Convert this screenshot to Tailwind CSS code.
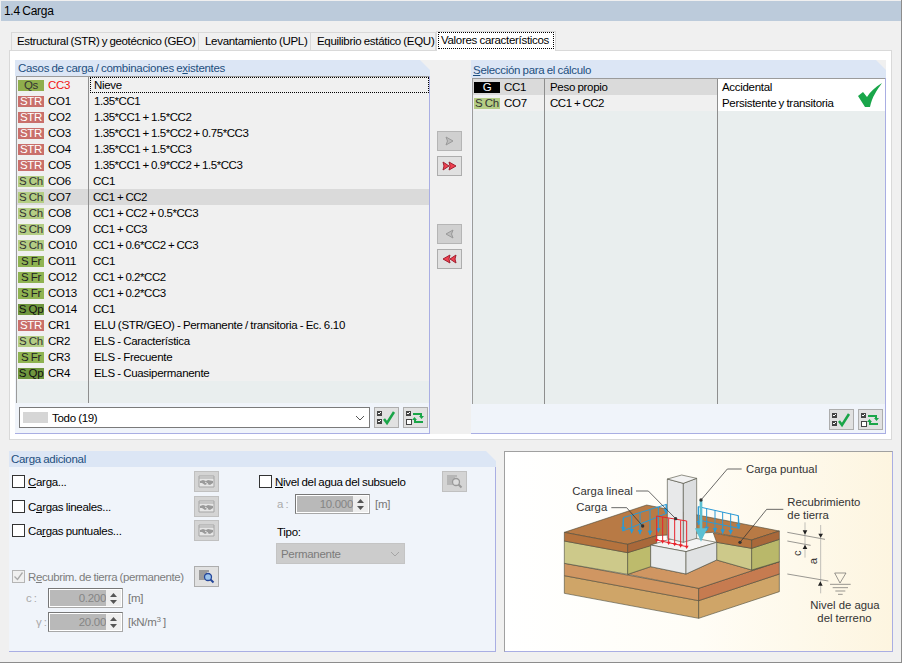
<!DOCTYPE html>
<html lang="es">
<head>
<meta charset="UTF-8">
<title>1.4 Carga</title>
<script src="https://cdn.jsdelivr.net/npm/@tailwindcss/browser@4"></script>
</head>
<body class="bg-[#f0f0f0] font-['Liberation_Sans',Arial,sans-serif] text-[11.5px] leading-[16px] tracking-[-0.3px] [word-spacing:-0.5px] whitespace-nowrap text-black">
<div class="w-[902px] h-[663px] bg-[#f0f0f0] pt-px border-r border-b border-[#8c8c8c] overflow-hidden">
    <!-- Titulo -->
    <div class="h-5 ml-px bg-[#bccbdb] pl-[3px] text-[12px] leading-[20px]">1.4 Carga</div>

    <!-- Pestañas -->
    <div class="flex items-end h-[20px] mt-[9px] pl-[11px]">
        <div class="h-[18px] w-[188px] border border-b-0 border-[#d9d9d9] pl-[5px] leading-[17px] tracking-[-0.35px]">Estructural (STR) y geotécnico (GEO)</div>
        <div class="h-[18px] w-[112px] border border-l-0 border-b-0 border-[#d9d9d9] pl-[6px] leading-[17px]">Levantamiento (UPL)</div>
        <div class="h-[18px] w-[125px] border border-l-0 border-b-0 border-[#d9d9d9] pl-[6px] leading-[17px]">Equilibrio estático (EQU)</div>
        <div class="h-[20px] w-[120px] border border-b-0 border-[#d9d9d9] bg-white px-[2px] pt-[1px] relative top-px">
            <span class="block outline-1 outline-dotted outline-black px-[2px] leading-[15px]">Valores característicos</span>
        </div>
    </div>

    <!-- Panel principal -->
    <div class="ml-[9px] w-[883px] h-[390px] border border-[#d9d9d9] bg-white pt-[9px] pl-[5px]">
      <div class="w-[871px] h-[374px] bg-[#f0f0f0] flex">
        <!-- Casos existentes -->
        <section class="w-[415px] h-[374px] flex flex-col">
            <div class="h-4 bg-[#dce6f5] pl-[3px] text-[#1e4f7e] leading-[17px] [clip-path:polygon(0_0,calc(100%-10px)_0,100%_10px,100%_100%,0_100%)]">Casos de carga / combinaciones e<u>x</u>istentes</div>
            <div class="flex-1 flex flex-col bg-[#f0f4fa] border-r border-b border-[#a9aee3]">
                <div class="h-[327px] ml-px border-t border-l border-[#9b9b9b] bg-[#e9eeee] relative">
                    <div class="absolute left-[71px] top-0 bottom-0 w-px bg-[#8e8e8e]"></div>
                    <div class="flex items-center h-4 bg-[#f0f0f0]"><span class="w-[26px] h-[11px] ml-px bg-[#8fae4c] text-center text-[#333] leading-[11px]">Qs</span><span class="w-[45px] pl-[4px] text-[#f01414]">CC3</span><span class="ml-px pl-[4px] w-[339px] h-4 outline-1 -outline-offset-1 outline-dotted outline-black">Nieve</span></div>
                    <div class="flex items-center h-4 bg-[#f0f0f0]"><span class="w-[26px] h-[11px] ml-px bg-[#c96f6b] text-center text-white leading-[11px]">STR</span><span class="w-[45px] pl-[4px]">CO1</span><span class="pl-[5px] tracking-[-0.45px]">1.35*CC1</span></div>
                    <div class="flex items-center h-4 bg-[#f0f0f0]"><span class="w-[26px] h-[11px] ml-px bg-[#c96f6b] text-center text-white leading-[11px]">STR</span><span class="w-[45px] pl-[4px]">CO2</span><span class="pl-[5px] tracking-[-0.45px]">1.35*CC1 + 1.5*CC2</span></div>
                    <div class="flex items-center h-4 bg-[#f0f0f0]"><span class="w-[26px] h-[11px] ml-px bg-[#c96f6b] text-center text-white leading-[11px]">STR</span><span class="w-[45px] pl-[4px]">CO3</span><span class="pl-[5px] tracking-[-0.45px]">1.35*CC1 + 1.5*CC2 + 0.75*CC3</span></div>
                    <div class="flex items-center h-4 bg-[#f0f0f0]"><span class="w-[26px] h-[11px] ml-px bg-[#c96f6b] text-center text-white leading-[11px]">STR</span><span class="w-[45px] pl-[4px]">CO4</span><span class="pl-[5px] tracking-[-0.45px]">1.35*CC1 + 1.5*CC3</span></div>
                    <div class="flex items-center h-4 bg-[#f0f0f0]"><span class="w-[26px] h-[11px] ml-px bg-[#c96f6b] text-center text-white leading-[11px]">STR</span><span class="w-[45px] pl-[4px]">CO5</span><span class="pl-[5px] tracking-[-0.45px]">1.35*CC1 + 0.9*CC2 + 1.5*CC3</span></div>
                    <div class="flex items-center h-4 bg-[#f0f0f0]"><span class="w-[26px] h-[11px] ml-px bg-[#b4cd84] text-center text-[#333] leading-[11px]">S Ch</span><span class="w-[45px] pl-[4px]">CO6</span><span class="pl-[4px]">CC1</span></div>
                    <div class="flex items-center h-4 bg-[#dadada]"><span class="w-[26px] h-[11px] ml-px bg-[#b4cd84] text-center text-[#333] leading-[11px]">S Ch</span><span class="w-[45px] pl-[4px]">CO7</span><span class="pl-[4px] tracking-[-0.45px]">CC1 + CC2</span></div>
                    <div class="flex items-center h-4 bg-[#f0f0f0]"><span class="w-[26px] h-[11px] ml-px bg-[#b4cd84] text-center text-[#333] leading-[11px]">S Ch</span><span class="w-[45px] pl-[4px]">CO8</span><span class="pl-[4px] tracking-[-0.45px]">CC1 + CC2 + 0.5*CC3</span></div>
                    <div class="flex items-center h-4 bg-[#f0f0f0]"><span class="w-[26px] h-[11px] ml-px bg-[#b4cd84] text-center text-[#333] leading-[11px]">S Ch</span><span class="w-[45px] pl-[4px]">CO9</span><span class="pl-[4px] tracking-[-0.45px]">CC1 + CC3</span></div>
                    <div class="flex items-center h-4 bg-[#f0f0f0]"><span class="w-[26px] h-[11px] ml-px bg-[#b4cd84] text-center text-[#333] leading-[11px]">S Ch</span><span class="w-[45px] pl-[4px]">CO10</span><span class="pl-[4px] tracking-[-0.45px]">CC1 + 0.6*CC2 + CC3</span></div>
                    <div class="flex items-center h-4 bg-[#f0f0f0]"><span class="w-[26px] h-[11px] ml-px bg-[#8fb352] text-center text-[#222] leading-[11px]">S Fr</span><span class="w-[45px] pl-[4px]">CO11</span><span class="pl-[4px]">CC1</span></div>
                    <div class="flex items-center h-4 bg-[#f0f0f0]"><span class="w-[26px] h-[11px] ml-px bg-[#8fb352] text-center text-[#222] leading-[11px]">S Fr</span><span class="w-[45px] pl-[4px]">CO12</span><span class="pl-[4px] tracking-[-0.45px]">CC1 + 0.2*CC2</span></div>
                    <div class="flex items-center h-4 bg-[#f0f0f0]"><span class="w-[26px] h-[11px] ml-px bg-[#8fb352] text-center text-[#222] leading-[11px]">S Fr</span><span class="w-[45px] pl-[4px]">CO13</span><span class="pl-[4px] tracking-[-0.45px]">CC1 + 0.2*CC3</span></div>
                    <div class="flex items-center h-4 bg-[#f0f0f0]"><span class="w-[26px] h-[11px] ml-px bg-[#6f963f] text-center text-[#111] leading-[11px]">S Qp</span><span class="w-[45px] pl-[4px]">CO14</span><span class="pl-[4px]">CC1</span></div>
                    <div class="flex items-center h-4 bg-[#f0f0f0]"><span class="w-[26px] h-[11px] ml-px bg-[#c96f6b] text-center text-white leading-[11px]">STR</span><span class="w-[45px] pl-[4px]">CR1</span><span class="pl-[5px]">ELU (STR/GEO) - Permanente / transitoria - Ec. 6.10</span></div>
                    <div class="flex items-center h-4 bg-[#f0f0f0]"><span class="w-[26px] h-[11px] ml-px bg-[#b4cd84] text-center text-[#333] leading-[11px]">S Ch</span><span class="w-[45px] pl-[4px]">CR2</span><span class="pl-[5px]">ELS - Característica</span></div>
                    <div class="flex items-center h-4 bg-[#f0f0f0]"><span class="w-[26px] h-[11px] ml-px bg-[#8fb352] text-center text-[#222] leading-[11px]">S Fr</span><span class="w-[45px] pl-[4px]">CR3</span><span class="pl-[5px]">ELS - Frecuente</span></div>
                    <div class="flex items-center h-4 bg-[#f0f0f0]"><span class="w-[26px] h-[11px] ml-px bg-[#6f963f] text-center text-[#111] leading-[11px]">S Qp</span><span class="w-[45px] pl-[4px]">CR4</span><span class="pl-[5px]">ELS - Cuasipermanente</span></div>
                </div>
                <div class="flex items-center gap-[4px] pl-[4px] pt-[4px]">
                    <div class="w-[351px] h-[21px] bg-white border border-[#7a7a7a] flex items-center pl-[3px] pr-[4px]">
                        <span class="w-[25px] h-[11px] bg-[#d6d6d6]"></span>
                        <span class="ml-[4px] flex-1">Todo (19)</span>
                        <svg width="10" height="6" viewBox="0 0 10 6"><path d="M1 1l4 4 4-4" fill="none" stroke="#555"/></svg>
                    </div>
                    <button class="w-[25px] h-[21px] bg-[#e1e1e1] border border-[#adadad] flex items-center justify-center">
                        <svg width="21" height="16" viewBox="0 0 21 16"><rect x="1" y="1" width="5" height="5" fill="#444"/><rect x="1" y="9" width="5" height="5" fill="#444"/><path d="M2 3l1 1 2-2M2 11l1 1 2-2" fill="none" stroke="#fff"/><path d="M8 9l3 4 7-11" fill="none" stroke="#1aa548" stroke-width="2.500"/></svg>
                    </button>
                    <button class="w-[25px] h-[21px] bg-[#e1e1e1] border border-[#adadad] flex items-center justify-center">
                        <svg width="21" height="16" viewBox="0 0 21 16"><rect x="1" y="1" width="5" height="5" fill="#444"/><rect x="1.500" y="9.500" width="5" height="5" fill="#fff" stroke="#444"/><path d="M2 3l1 1 2-2" fill="none" stroke="#fff"/><path d="M8 4h8v3M18 12h-8v-3" fill="none" stroke="#1aa548" stroke-width="2"/><path d="M14 6h5l-2.500 3zM12 10H7l2.500-3z" fill="#1aa548"/></svg>
                    </button>
                </div>
            </div>
        </section>

        <!-- Botones centrales -->
        <div class="w-[41px] pl-[7px] pt-[71px] flex flex-col">
            <button class="w-[25px] h-[20px] bg-[#d0d0d0] border border-[#b5b5b5] flex items-center justify-center">
                <svg width="11" height="10" viewBox="0 0 11 10"><path d="M2 1l7 4-7 4 1.500-4z" fill="#bdbdbd" stroke="#999"/></svg>
            </button>
            <button class="w-[25px] h-[20px] mt-[5px] bg-[#e1e1e1] border border-[#adadad] flex items-center justify-center">
                <svg width="15" height="10" viewBox="0 0 15 10"><path d="M1 1l6 4-6 4 1-4zM7 1l7 4-7 4 1-4z" fill="#f04050" stroke="#a02030"/></svg>
            </button>
            <button class="w-[25px] h-[20px] mt-[48px] bg-[#d0d0d0] border border-[#b5b5b5] flex items-center justify-center">
                <svg width="11" height="10" viewBox="0 0 11 10"><path d="M9 1L2 5l7 4-1.500-4z" fill="#bdbdbd" stroke="#999"/></svg>
            </button>
            <button class="w-[25px] h-[20px] mt-[5px] bg-[#e1e1e1] border border-[#adadad] flex items-center justify-center">
                <svg width="15" height="10" viewBox="0 0 15 10"><path d="M14 1L8 5l6 4-1-4zM8 1L1 5l7 4-1-4z" fill="#f04050" stroke="#a02030"/></svg>
            </button>
        </div>

        <!-- Seleccion -->
        <section class="w-[415px] h-[374px] flex flex-col">
            <div class="h-[18px] bg-[#dce6f5] pl-[2px] text-[#1e4f7e] leading-[21px] [clip-path:polygon(0_0,calc(100%-10px)_0,100%_10px,100%_100%,0_100%)]"><u>S</u>elección para el cálculo</div>
            <div class="flex-1 flex flex-col bg-[#f0f4fa] border-r border-b border-[#a9aee3]">
                <div class="h-[326px] ml-px border-t border-l border-[#9b9b9b] bg-[#e9eeee] relative">
                    <div class="absolute left-[71px] top-0 bottom-0 w-px bg-[#8e8e8e]"></div>
                    <div class="absolute left-[244px] top-0 bottom-0 w-px bg-[#8e8e8e]"></div>
                    <div class="absolute left-[245px] top-0 w-[167px] h-8 bg-white"></div>
                    <svg class="absolute left-[385px] top-[4px]" width="24" height="24" viewBox="0 0 24 24"><path d="M0 13l5-4 4 5C12 9 17 4 24 0c-5 7-10 14-12 24H7z" fill="#19a64a"/></svg>
                    <div class="flex items-center h-4 bg-[#dadada] w-[245px]"><span class="w-[26px] h-[11px] ml-px bg-black text-center text-white leading-[11px]">G</span><span class="w-[45px] pl-[4px]">CC1</span><span class="pl-[5px]">Peso propio</span></div>
                    <div class="flex items-center h-4 bg-[#f0f0f0] w-[245px]"><span class="w-[26px] h-[11px] ml-px bg-[#b4cd84] text-center text-[#333] leading-[11px]">S Ch</span><span class="w-[45px] pl-[4px]">CO7</span><span class="pl-[5px] tracking-[-0.45px]">CC1 + CC2</span></div>
                    <div class="absolute left-[249px] top-0"><div class="h-4">Accidental</div><div class="h-4">Persistente y transitoria</div></div>
                </div>
                <div class="flex justify-end gap-[4px] pr-[2px] pt-[5px]">
                    <button class="w-[25px] h-[21px] bg-[#e1e1e1] border border-[#adadad] flex items-center justify-center">
                        <svg width="21" height="16" viewBox="0 0 21 16"><rect x="1" y="1" width="5" height="5" fill="#444"/><rect x="1" y="9" width="5" height="5" fill="#444"/><path d="M2 3l1 1 2-2M2 11l1 1 2-2" fill="none" stroke="#fff"/><path d="M8 9l3 4 7-11" fill="none" stroke="#1aa548" stroke-width="2.500"/></svg>
                    </button>
                    <button class="w-[25px] h-[21px] bg-[#e1e1e1] border border-[#adadad] flex items-center justify-center">
                        <svg width="21" height="16" viewBox="0 0 21 16"><rect x="1" y="1" width="5" height="5" fill="#444"/><rect x="1.500" y="9.500" width="5" height="5" fill="#fff" stroke="#444"/><path d="M2 3l1 1 2-2" fill="none" stroke="#fff"/><path d="M8 4h8v3M18 12h-8v-3" fill="none" stroke="#1aa548" stroke-width="2"/><path d="M14 6h5l-2.500 3zM12 10H7l2.500-3z" fill="#1aa548"/></svg>
                    </button>
                </div>
            </div>
        </section>
      </div>
    </div>

    <!-- Parte inferior -->
    <div class="flex mt-[11px] ml-[9px] gap-[8px]">
        <section class="w-[487px] h-[201px] flex flex-col">
            <div class="h-4 bg-[#dce6f5] pl-[2px] text-[#1e4f7e] leading-[17px] [clip-path:polygon(0_0,calc(100%-10px)_0,100%_10px,100%_100%,0_100%)]">Carga adicional</div>
            <div class="flex-1 flex bg-[#f0f4fa] border-r border-b border-[#a9aee3]">
                <!-- Columna izquierda -->
                <div class="w-[250px] pl-[3px] pt-[4px]">
                    <div class="flex items-center h-[21px]"><span class="w-[13px] h-[13px] bg-white border border-[#333]"></span><span class="ml-[3px] w-[166px]"><u>C</u>arga...</span>
                        <button class="w-[25px] h-[21px] bg-[#d4d4d4] border border-[#c0c0c0] flex items-center justify-center"><svg width="17" height="13" viewBox="0 0 17 13"><path d="M1 1h15v11H1z" fill="#e6e6e6" stroke="#a5a5a5"/><path d="M1 3h15" stroke="#a5a5a5"/><path d="M2 6l3-1 3 1 2-1 5 1v2l-3 2-3-1-2 1-3-2H2z" fill="#9a9a9a"/><path d="M7 7l3 2" stroke="#e6e6e6"/></svg></button></div>
                    <div class="flex items-center h-[21px] mt-[4px]"><span class="w-[13px] h-[13px] bg-white border border-[#333]"></span><span class="ml-[3px] w-[166px]">C<u>a</u>rgas lineales...</span>
                        <button class="w-[25px] h-[21px] bg-[#d4d4d4] border border-[#c0c0c0] flex items-center justify-center"><svg width="17" height="13" viewBox="0 0 17 13"><path d="M1 1h15v11H1z" fill="#e6e6e6" stroke="#a5a5a5"/><path d="M1 3h15" stroke="#a5a5a5"/><path d="M2 6l3-1 3 1 2-1 5 1v2l-3 2-3-1-2 1-3-2H2z" fill="#9a9a9a"/><path d="M7 7l3 2" stroke="#e6e6e6"/></svg></button></div>
                    <div class="flex items-center h-[21px] mt-[3px]"><span class="w-[13px] h-[13px] bg-white border border-[#333]"></span><span class="ml-[3px] w-[166px]">Ca<u>r</u>gas puntuales...</span>
                        <button class="w-[25px] h-[21px] bg-[#d4d4d4] border border-[#c0c0c0] flex items-center justify-center"><svg width="17" height="13" viewBox="0 0 17 13"><path d="M1 1h15v11H1z" fill="#e6e6e6" stroke="#a5a5a5"/><path d="M1 3h15" stroke="#a5a5a5"/><path d="M2 6l3-1 3 1 2-1 5 1v2l-3 2-3-1-2 1-3-2H2z" fill="#9a9a9a"/><path d="M7 7l3 2" stroke="#e6e6e6"/></svg></button></div>
                    <div class="flex items-center h-[21px] mt-[25px]"><span class="w-[13px] h-[13px] bg-[#f0f0f0] border border-[#b5b5b5] flex items-center justify-center"><svg width="11" height="11" viewBox="0 0 11 11"><path d="M1.500 5.500l3 3 5-7" fill="none" stroke="#aaa" stroke-width="1.300"/></svg></span><span class="ml-[3px] w-[166px] text-[#7d7d7d] tracking-[-0.4px]">R<u>e</u>cubrim. de tierra (permanente)</span>
                        <button class="w-[25px] h-[21px] bg-[#e1e1e1] border border-[#adadad] flex items-center justify-center"><svg width="17" height="15" viewBox="0 0 17 15"><path d="M1 2h10M1 4h8M1 6h6M1 8h6M1 10h7" stroke="#555"/><circle cx="10" cy="8" r="3.500" fill="#9cc4ea" stroke="#24469a" stroke-width="1.300"/><path d="M12.500 10.500l3 3" stroke="#24469a" stroke-width="2"/></svg></button></div>
                    <div class="flex items-center h-[20px] mt-px"><span class="w-[36px] pl-[14px] text-[#aaa]">c :</span>
                        <div class="w-[75px] h-[20px] flex border border-[#a8a8a8] border-l-[#777] border-t-[#777] bg-white p-px"><span class="w-[56px] bg-[#b9b9b9] text-right leading-[16px] text-[#858585]">0.200</span><span class="flex-1 flex flex-col items-center justify-center gap-[3px] bg-[#eee]"><svg width="7" height="4" viewBox="0 0 7 4"><path d="M0 4l3.500-4L7 4z" fill="#555"/></svg><svg width="7" height="4" viewBox="0 0 7 4"><path d="M0 0l3.500 4L7 0z" fill="#555"/></svg></span></div>
                        <span class="ml-[5px] text-[#777]">[m]</span></div>
                    <div class="flex items-center h-[20px] mt-[4px]"><span class="w-[36px] pl-[24px] text-[#aaa]">γ :</span>
                        <div class="w-[75px] h-[20px] flex border border-[#a8a8a8] border-l-[#777] border-t-[#777] bg-white p-px"><span class="w-[56px] bg-[#b9b9b9] text-right leading-[16px] text-[#858585]">20.00</span><span class="flex-1 flex flex-col items-center justify-center gap-[3px] bg-[#eee]"><svg width="7" height="4" viewBox="0 0 7 4"><path d="M0 4l3.500-4L7 4z" fill="#555"/></svg><svg width="7" height="4" viewBox="0 0 7 4"><path d="M0 0l3.500 4L7 0z" fill="#555"/></svg></span></div>
                        <span class="ml-[5px] text-[#777]">[kN/m<sup class="text-[8px] leading-none">3</sup> ]</span></div>
                </div>
                <!-- Columna derecha -->
                <div class="pt-[4px]">
                    <div class="flex items-center h-[21px]"><span class="w-[13px] h-[13px] bg-white border border-[#333]"></span><span class="ml-[3px] w-[167px]"><u>N</u>ivel del agua del subsuelo</span>
                        <button class="w-[25px] h-[21px] bg-[#d4d4d4] border border-[#c0c0c0] flex items-center justify-center"><svg width="17" height="15" viewBox="0 0 17 15"><path d="M1 2h10M1 4h8M1 6h6M1 8h6M1 10h7" stroke="#999"/><circle cx="10" cy="8" r="3.500" fill="#ddd" stroke="#999" stroke-width="1.300"/><path d="M12.500 10.500l3 3" stroke="#999" stroke-width="2"/></svg></button></div>
                    <div class="flex items-center h-[20px] mt-[2px]"><span class="w-[36px] pl-[18px] text-[#aaa]">a :</span>
                        <div class="w-[75px] h-[20px] flex border border-[#a8a8a8] border-l-[#777] border-t-[#777] bg-white p-px"><span class="w-[56px] bg-[#b9b9b9] text-right leading-[16px] text-[#858585]">10.000</span><span class="flex-1 flex flex-col items-center justify-center gap-[3px] bg-[#eee]"><svg width="7" height="4" viewBox="0 0 7 4"><path d="M0 4l3.500-4L7 4z" fill="#555"/></svg><svg width="7" height="4" viewBox="0 0 7 4"><path d="M0 0l3.500 4L7 0z" fill="#555"/></svg></span></div>
                        <span class="ml-[5px] text-[#777]">[m]</span></div>
                    <div class="mt-[10px] pl-[18px]">Tipo:</div>
                    <div class="mt-[3px] ml-[17px] w-[129px] h-[21px] bg-[#cccccc] border border-[#c4c4c4] flex items-center pl-[4px] pr-[4px] text-[#7b7b7b]">
                        <span class="flex-1">Permanente</span>
                        <svg width="10" height="6" viewBox="0 0 10 6"><path d="M1 1l4 4 4-4" fill="none" stroke="#a5a5a5"/></svg>
                    </div>
                </div>
            </div>
        </section>

        <!-- Esquema -->
        <section class="w-[389px] h-[201px] border-l border-t border-r border-b border-[#a0a0a0] border-r-[#a9aee3] border-b-[#a9aee3] bg-gradient-to-r from-white via-[#fffdf6] to-[#fdf5e0]">
            <svg class="block tracking-normal [word-spacing:0]" width="387" height="199" viewBox="15 21 1161 597" font-family="Liberation Sans, Arial, sans-serif" font-size="34" fill="#333">
                <g stroke="#4a4a3a" stroke-width="1.800" stroke-linejoin="round">
                    <!-- capas de suelo -->
                    <path d="M193 392L596 467V520L193 445z" fill="#cfa568"/>
                    <path d="M596 467L838 387V440L596 520z" fill="#cfa568"/>
                    <path d="M193 355L596 430V467L193 392z" fill="#d09662"/>
                    <path d="M596 430L838 350V387L596 467z" fill="#c67b50"/>
                    <path d="M383 388L452 365L558 387L650 345L755 375L838 350L596 430z" fill="#d09662"/>
                    <path d="M193 288L383 323V388L193 355z" fill="#cdc98a"/>
                    <path d="M383 323L452 300V365L383 388z" fill="#bdbb6c"/>
                    <path d="M650 292L755 310V375L650 345z" fill="#cdc98a"/>
                    <path d="M755 310L838 283V350L755 375z" fill="#b9b86a"/>
                    <path d="M193 262L440 180L838 258L755 285L640 262L470 272L383 298z" fill="#b87a45"/>
                    <path d="M193 262L383 298V323L193 288z" fill="#b5733e"/>
                    <path d="M383 298L470 272V297L383 323z" fill="#a9683a"/>
                    <path d="M640 264L755 285V310L650 292z" fill="#b5733e"/>
                    <path d="M755 285L838 258V283L755 310z" fill="#a9683a"/>
                    <!-- zapata y pilar -->
                    <path d="M452 300L545 272L650 292L558 320z" fill="#f4f4f4"/>
                    <path d="M452 300L558 320V387L452 365z" fill="#e9ebec"/>
                    <path d="M558 320L650 292V345L558 387z" fill="#e0e2e3"/>
                    <path d="M502 102L550 115V292L502 280z" fill="#e8e9ea"/>
                    <path d="M550 115L590 100V280L550 292z" fill="#dcdedf"/>
                    <path d="M502 102L545 90L590 100L550 115z" fill="#f2f2f2"/>
                </g>
                <!-- carga superficial -->
                <g fill="none" stroke="#2a9ad6" stroke-width="3">
                    <path d="M370 218L500 178V205L368 258zM370 218V258M395 211V265M420 203V268M450 194V270M475 186V262M498 178V205"/>
                    <path d="M595 185L715 212L718 250L595 225zM595 185V240M620 190V258M645 196V262M668 201V266M692 206V268M715 212V250"/>
                </g>
                <g fill="#2a9ad6">
                    <path d="M363 246h14l-7 12zM388 252h14l-7 13zM413 255h14l-7 13zM443 257h14l-7 13zM468 249h14l-7 13zM490 192h14l-7 13z"/>
                    <path d="M590 228h14l-7 13zM613 245h14l-7 13zM638 249h14l-7 13zM661 253h14l-7 13zM685 255h14l-7 13zM708 238h14l-7 12z"/>
                </g>
                <!-- carga lineal -->
                <g fill="none" stroke="#e8242c" stroke-width="3">
                    <path d="M470 213L560 228V305L470 285zM488 216V289M506 220V293M524 223V297M542 226V301"/>
                </g>
                <path d="M464 282h12l-6 10zM482 286h12l-6 10zM500 290h12l-6 10zM518 294h12l-6 10zM536 298h12l-6 10zM554 302h12l-6 10z" fill="#e8242c"/>
                <!-- carga puntual -->
                <path d="M599 165H607V250H622L603 290L585 250H599z" fill="#5cc0d2"/>
                <!-- cotas -->
                <g fill="none" stroke="#555" stroke-width="1.800">
                    <path d="M862 262L975 283M862 288L932 301M862 387L985 408"/>
                    <path d="M915 232V338M962 240V445" stroke="#999"/>
                    <path d="M1004 384H1038L1020 414zM990 418H1052M998 428H1044M1006 438H1036M1014 448H1028"/>
                </g>
                <path d="M908 256h14l-7 13zM955 266h14l-7 12zM908 312h14l-7-13zM954 422h14l-7-13z" fill="#222"/>
                <!-- lineas de referencia -->
                <g fill="none" stroke="#333" stroke-width="2.200">
                    <path d="M408 138H445L527 221M334 188H380L428 243M603 165L682 72H725M720 292L800 193H850"/>
                </g>
                <g fill="#333"><circle cx="527" cy="221" r="5"/><circle cx="428" cy="243" r="5"/><circle cx="603" cy="165" r="5"/><circle cx="720" cy="292" r="5"/></g>
                <text x="738" y="83">Carga puntual</text>
                <text x="217" y="149">Carga lineal</text>
                <text x="229" y="197">Carga</text>
                <text x="862" y="182">Recubrimiento</text>
                <text x="862" y="221">de tierra</text>
                <text x="931" y="491">Nivel de agua</text>
                <text x="952" y="530">del terreno</text>
                <text transform="translate(903 333) rotate(-90)">c</text>
                <text transform="translate(950 358) rotate(-90)">a</text>
            </svg>
        </section>
    </div>
</div>
</body>
</html>
